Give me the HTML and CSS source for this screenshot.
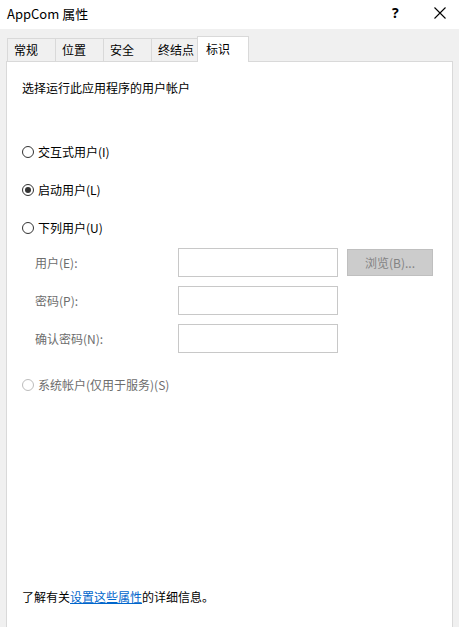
FILE: index.html
```html
<!DOCTYPE html>
<html lang="zh-CN">
<head>
<meta charset="utf-8">
<title>AppCom 属性</title>
<link rel="stylesheet" href="styles.css">
</head>
<body>
<div class="window">
  <div class="titlebar">
    <span class="title">AppCom 属性</span>
    <span class="help">?</span>
    <span class="close">
      <svg width="12" height="12" viewBox="0 0 12 12"><path d="M0.5 0.5 L11.5 11.5 M11.5 0.5 L0.5 11.5" stroke="#000" stroke-width="1.1" fill="none"/></svg>
    </span>
  </div>
  <div class="tabs">
    <div class="tab">常规</div>
    <div class="tab">位置</div>
    <div class="tab">安全</div>
    <div class="tab">终结点</div>
    <div class="tab active">标识</div>
  </div>
  <div class="panel">
    <div class="intro">选择运行此应用程序的用户帐户</div>
    <div class="radio first"><span class="dot"></span>交互式用户(I)</div>
    <div class="radio gap"><span class="dot checked"></span>启动用户(L)</div>
    <div class="radio gap"><span class="dot"></span>下列用户(U)</div>
    <div class="fields">
      <div class="field">
        <span class="label">用户(E):</span>
        <span class="input"></span>
        <span class="button">浏览(B)...</span>
      </div>
      <div class="field">
        <span class="label">密码(P):</span>
        <span class="input"></span>
      </div>
      <div class="field">
        <span class="label">确认密码(N):</span>
        <span class="input"></span>
      </div>
    </div>
    <div class="radio disabled sys"><span class="dot"></span>系统帐户(仅用于服务)(S)</div>
    <div class="footer">了解有关<a class="link" href="#">设置这些属性</a>的详细信息。</div>
  </div>
</div>
</body>
</html>
```
FILE: styles.css
```css
* { box-sizing: border-box; }
html, body { margin: 0; padding: 0; }
body {
  width: 459px;
  height: 627px;
  overflow: hidden;
  background: #f0f0f0;
  font-family: "Noto Sans CJK SC", "Noto Sans", sans-serif;
  font-size: 12px;
  color: #000;
}
.window { display: flex; flex-direction: column; height: 627px; }
.titlebar {
  height: 29px;
  background: #fff;
  display: flex;
  align-items: center;
  padding-left: 7px;
  flex-shrink: 0;
}
.title { font-size: 13px; flex: 1; margin-top: -3px; }
.help { font-size: 14px; font-weight: bold; width: 16px; margin-right: 26px; margin-top: -4px; font-family: "Noto Sans", sans-serif; }
.close { width: 12px; margin-right: 13px; display: flex; margin-top: -4px; }
.tabs {
  margin-top: 9px;
  padding-left: 7px;
  height: 23px;
  display: flex;
  align-items: flex-end;
  flex-shrink: 0;
  position: relative;
  z-index: 1;
}
.tab {
  width: 49px;
  height: 23px;
  margin-right: -1px;
  border: 1px solid #d9d9d9;
  border-bottom: none;
  background: #f0f0f0;
  padding-left: 6px;
  line-height: 22px;
}
.tab.active {
  width: 52px;
  height: 26px;
  margin-left: -2px;
  margin-bottom: -1px;
  background: #fff;
  line-height: 24px;
  padding-left: 8px;
}
.panel {
  flex: 1;
  margin: 0 6px 0 6px;
  background: #fff;
  border: 1px solid #d9d9d9;
  border-bottom: none;
  display: flex;
  flex-direction: column;
  padding: 18px 15px 22px 15px;
}
.intro { line-height: 16px; }
.radio { display: flex; align-items: center; line-height: 16px; height: 16px; }
.radio.first { margin-top: 48px; }
.radio.gap { margin-top: 22px; }
.dot {
  width: 12px;
  height: 12px;
  border: 1px solid #333;
  border-radius: 50%;
  margin-right: 4px;
  display: flex;
  align-items: center;
  justify-content: center;
  background: #fff;
}
.dot.checked::after {
  content: "";
  width: 6px;
  height: 6px;
  border-radius: 50%;
  background: #333;
}
.fields { margin-top: 12px; padding-left: 13px; display: flex; flex-direction: column; gap: 9px; }
.field { display: flex; align-items: center; height: 29px; }
.label { width: 143px; color: #6d6d6d; }
.input { width: 160px; height: 29px; border: 1px solid #c8c8c8; background: #fff; }
.button {
  margin-left: 9px;
  width: 86px;
  height: 27px;
  background: #cccccc;
  border: 1px solid #bfbfbf;
  color: #838383;
  display: flex;
  align-items: center;
  justify-content: center;
}
.radio.sys { margin-top: 24px; }
.radio.disabled { color: #6d6d6d; }
.radio.disabled .dot { border-color: #bcbcbc; }
.footer { margin-top: auto; line-height: 16px; }
.link { color: #0066cc; text-decoration: underline; }
```
